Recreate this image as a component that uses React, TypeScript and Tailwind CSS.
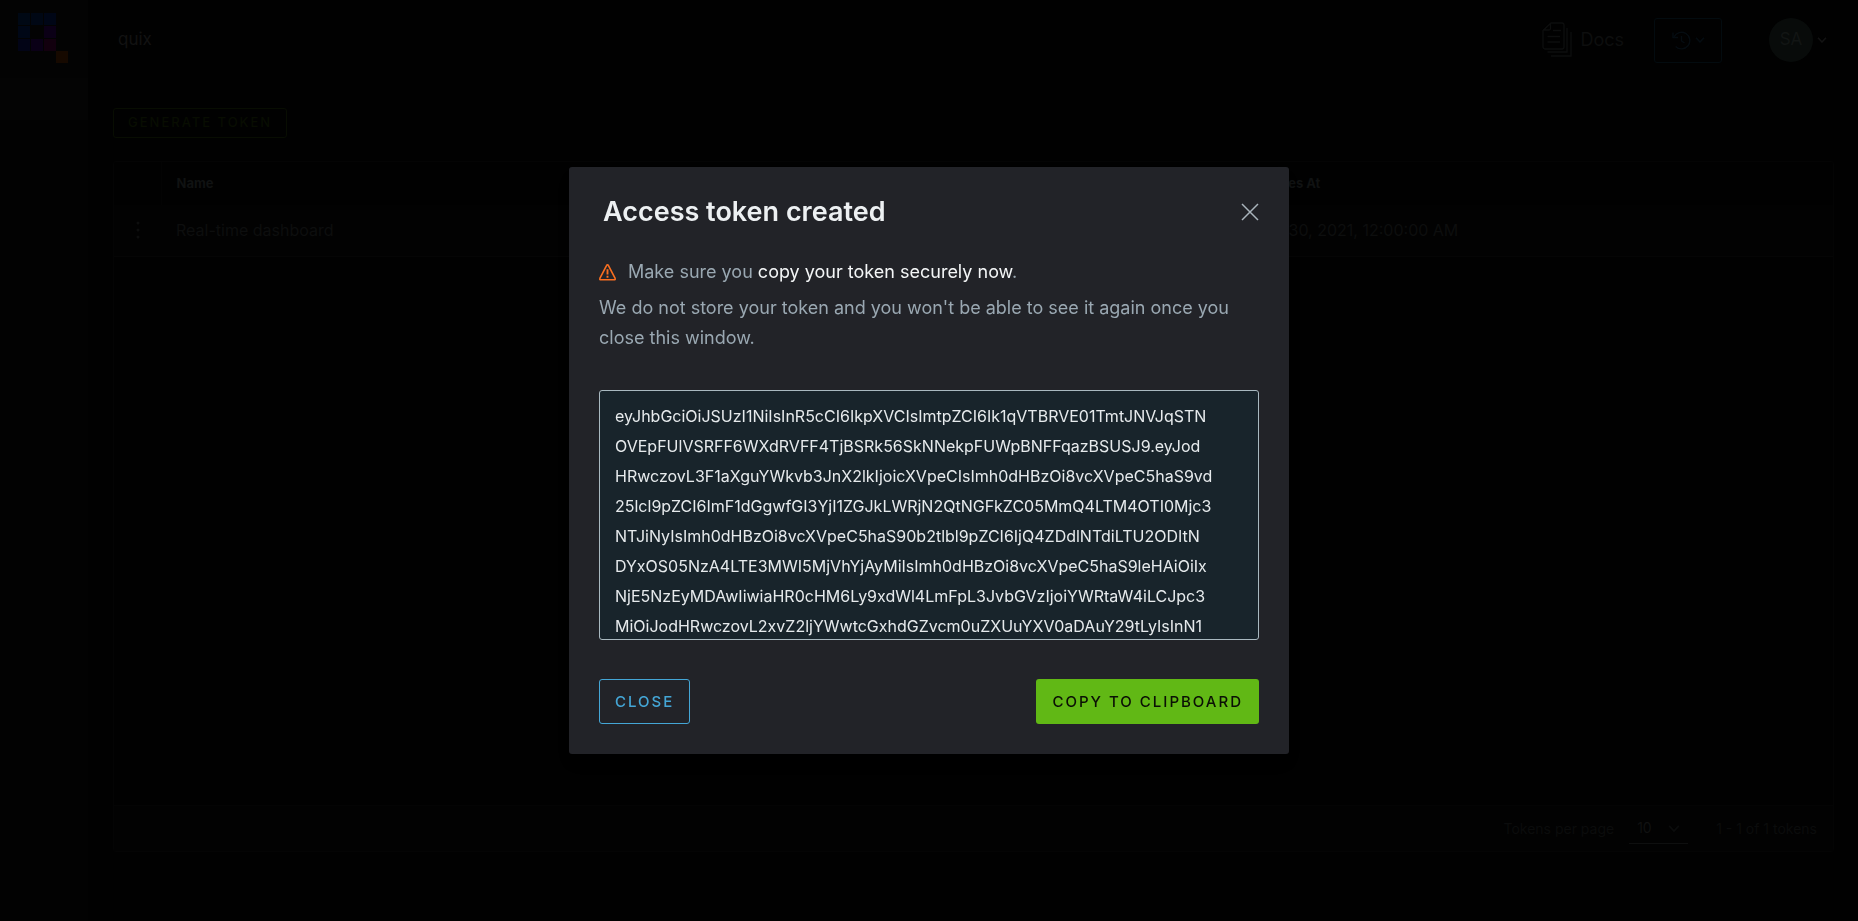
import { useState } from "react";
import type { ReactNode } from "react";

const TOKEN = [
  "eyJhbGciOiJSUzI1NiIsInR5cCI6IkpXVCIsImtpZCI6Ik1qVTBRVE01TmtJNVJqSTN",
  "OVEpFUlVSRFF6WXdRVFF4TjBSRk56SkNNekpFUWpBNFFqazBSUSJ9.eyJod",
  "HRwczovL3F1aXguYWkvb3JnX2lkIjoicXVpeCIsImh0dHBzOi8vcXVpeC5haS9vd",
  "25lcl9pZCI6ImF1dGgwfGI3YjI1ZGJkLWRjN2QtNGFkZC05MmQ4LTM4OTI0Mjc3",
  "NTJiNyIsImh0dHBzOi8vcXVpeC5haS90b2tlbl9pZCI6IjQ4ZDdlNTdiLTU2ODItN",
  "DYxOS05NzA4LTE3MWI5MjVhYjAyMiIsImh0dHBzOi8vcXVpeC5haS9leHAiOiIx",
  "NjE5NzEyMDAwIiwiaHR0cHM6Ly9xdWl4LmFpL3JvbGVzIjoiYWRtaW4iLCJpc3",
  "MiOiJodHRwczovL2xvZ2ljYWwtcGxhdGZvcm0uZXUuYXV0aDAuY29tLyIsInN1",
].join("\n");

const LOGO_TILES = [
  { x: 0, y: 0, fill: "#000814" },
  { x: 13, y: 0, fill: "#000714" },
  { x: 26, y: 0, fill: "#000616" },
  { x: 0, y: 13, fill: "#000716" },
  { x: 26, y: 13, fill: "#0b0016" },
  { x: 0, y: 26, fill: "#020416" },
  { x: 13, y: 26, fill: "#0a0016" },
  { x: 26, y: 26, fill: "#12000e" },
  { x: 38, y: 38, fill: "#160900" },
];

function Logo() {
  return (
    <svg width="50" height="50" viewBox="0 0 50 50" aria-hidden="true">
      {LOGO_TILES.map((t) => (
        <rect key={`${t.x}-${t.y}`} x={t.x} y={t.y} width="12" height="12" fill={t.fill} />
      ))}
    </svg>
  );
}

function Chevron({ className }: { className: string }) {
  return (
    <svg className={className} viewBox="0 0 10 6" fill="none" stroke="currentColor" strokeWidth="1.5" aria-hidden="true">
      <path d="M1 .7 5 5 9 .7" />
    </svg>
  );
}

function DocsIcon() {
  return (
    <svg width="30" height="36" viewBox="0 0 30 36" fill="none" stroke="currentColor" strokeWidth="1.3" aria-hidden="true">
      <path d="M9 1h11a2 2 0 0 1 2 2v22a2 2 0 0 1-2 2H3a2 2 0 0 1-2-2V8.5zM8.5 1v5.5A1.5 1.5 0 0 1 7 8H1" />
      <path d="M11 8.5h8M5.5 14.5H18M5.5 20H18M25 6v24H5.5M29 10v24H9" />
    </svg>
  );
}

function HistoryIcon() {
  return (
    <svg width="19" height="19" viewBox="0 0 19 19" fill="none" stroke="currentColor" strokeWidth="1.4" aria-hidden="true">
      <path d="M1 1.5v5h5" />
      <path d="M2 6a8.3 8.3 0 1 1 1.6 9.4" />
      <path d="M9.5 5v5l3 2" />
    </svg>
  );
}

function Header() {
  return (
    <header className="flex h-20 items-center pr-[31px] pl-[30px] text-[17px]">
      <span className="text-[#121212]">quix</span>
      <a href="#docs" className="ml-auto flex items-center gap-2 text-lg text-[#0d0e0e]">
        <DocsIcon />
        Docs
      </a>
      <button
        type="button"
        aria-label="History"
        className="ml-[30px] flex h-[45px] w-[68px] items-center justify-center gap-1 rounded-[3px] border border-[#030b0f] text-[#050c11]"
      >
        <HistoryIcon />
        <Chevron className="w-[10px]" />
      </button>
      <button type="button" aria-label="Account" className="ml-[47px] flex items-center gap-1 text-[#131313]">
        <span className="flex size-11 items-center justify-center rounded-full bg-[#080b0a] text-[17px] text-[#121514]">SA</span>
        <Chevron className="w-[10px]" />
      </button>
    </header>
  );
}

function TokensPage() {
  return (
    <div className="flex min-h-screen bg-[#010101]">
      <aside className="w-[88px] shrink-0 bg-[#020202]">
        <div className="flex h-[78px] bg-[#030303] pt-[13px] pl-[18px]">
          <Logo />
        </div>
        <div className="h-[42px] bg-[#040404]" />
      </aside>
      <div className="flex min-w-0 flex-1 flex-col">
        <Header />
        <main className="flex flex-1 flex-col items-start pt-7 pr-6 pb-[69px] pl-[25px]">
          <button
            type="button"
            className="h-[30px] rounded-[3px] border border-[#080d02] px-[14px] text-[13px] font-medium tracking-[2px] text-[#080d01]"
          >
            GENERATE TOKEN
          </button>
          <section className="mt-[23px] flex w-full flex-1 flex-col rounded-[3px] border border-[#040404]">
            <table className="w-full table-fixed text-left">
              <thead>
                <tr className="h-[43px] text-[13px] text-[#101212]">
                  <th className="w-[47px] border-r border-[#030303]" aria-label="Actions" />
                  <th className="pl-[15px] font-bold">Name</th>
                  <th className="w-[592px] pl-[15px] font-bold">Expires At</th>
                </tr>
              </thead>
              <tbody>
                <tr className="h-[51px] border-b border-[#050505] bg-[#020202] text-base text-[#0d0e0e]">
                  <td>
                    <button type="button" aria-label="Token actions" className="flex w-full justify-center">
                      <svg width="4" height="18" viewBox="0 0 4 18" fill="currentColor" aria-hidden="true">
                        <circle cx="2" cy="2" r="1.5" />
                        <circle cx="2" cy="9" r="1.5" />
                        <circle cx="2" cy="16" r="1.5" />
                      </svg>
                    </button>
                  </td>
                  <td className="pl-[15px]">Real-time dashboard</td>
                  <td className="pl-[15px]">Jun 30, 2021, 12:00:00 AM</td>
                </tr>
              </tbody>
            </table>
            <footer className="mt-auto flex h-[46px] items-center justify-end border-t border-[#040404] bg-[#020202] pr-4 text-sm text-[#0b0c0c]">
              <label htmlFor="page-size">Tokens per page</label>
              <span className="relative ml-[15px] flex items-center">
                <select
                  id="page-size"
                  defaultValue="10"
                  className="h-[30px] w-[59px] appearance-none border-b border-[#0e0f0f] bg-transparent pl-2 text-[#101111]"
                >
                  <option>10</option>
                </select>
                <Chevron className="pointer-events-none absolute right-2 w-3" />
              </span>
              <span className="ml-7">1 - 1 of 1 tokens</span>
            </footer>
          </section>
        </main>
      </div>
    </div>
  );
}

function WarningIcon() {
  return (
    <svg width="17" height="17" viewBox="0 0 18 18" fill="none" stroke="#f96f20" strokeWidth="1.7" strokeLinejoin="round" aria-hidden="true">
      <path d="M8.1 1.5a1 1 0 0 1 1.8 0l7.2 13.7a1 1 0 0 1-.9 1.5H1.8a1 1 0 0 1-.9-1.5z" />
      <path d="M9 5.5V11M9 12.5v2" strokeWidth="2" />
    </svg>
  );
}

function Modal({ onClose, children }: { onClose: () => void; children: ReactNode }) {
  return (
    <div className="fixed inset-0 flex items-center justify-center">
      <div
        role="dialog"
        aria-modal="true"
        aria-labelledby="dialog-title"
        className="w-[720px] max-w-full rounded-[3px] bg-[#222328] px-[30px] pb-[30px] shadow-lg"
      >
        <div className="flex h-[90px] items-center justify-between pl-1">
          <h1 id="dialog-title" className="text-[27px] font-semibold text-[#edf0f2]">
            Access token created
          </h1>
          <button type="button" aria-label="Close dialog" onClick={onClose} className="text-[#a9b4bc]">
            <svg width="18" height="18" viewBox="0 0 18 18" fill="none" stroke="currentColor" strokeWidth="1.5" aria-hidden="true">
              <path d="M1 1l16 16M17 1 1 17" />
            </svg>
          </button>
        </div>
        {children}
      </div>
    </div>
  );
}

export default function App() {
  const [open, setOpen] = useState(true);
  const close = () => setOpen(false);

  return (
    <div className="font-['Inter','Liberation_Sans',sans-serif]">
      <TokensPage />
      {open && (
        <Modal onClose={close}>
          <p className="flex h-[30px] items-center text-lg text-[#9aa8b2]">
            <WarningIcon />
            <span className="ml-3">
              Make sure you <strong className="font-normal text-[#f4f6f7]">copy your token securely now</strong>.
            </span>
          </p>
          <p className="mt-[6px] text-lg leading-[30px] text-[#9aa8b2]">
            We do not store your token and you won't be able to see it again once you close this window.
          </p>
          <textarea
            readOnly
            aria-label="Access token"
            value={TOKEN}
            className="mt-[37px] block h-[250px] w-full resize-none overflow-hidden rounded-[3px] border border-[#a9b9c0] bg-[#18242b] px-[15px] pt-[10px] text-base leading-[30px] whitespace-pre text-[#e6eaec] outline-none"
          />
          <div className="mt-[39px] flex justify-between text-[15px] font-medium tracking-[2px]">
            <button
              type="button"
              onClick={close}
              className="h-[45px] rounded-[3px] border border-[#44a6d6] px-[15px] pt-0.5 text-[#44a6d6]"
            >
              CLOSE
            </button>
            <button
              type="button"
              onClick={() => navigator.clipboard?.writeText(TOKEN.replace(/\n/g, ""))}
              className="h-[45px] rounded-[3px] bg-[#61b815] px-4 pt-0.5 text-[#0b1005]"
            >
              COPY TO CLIPBOARD
            </button>
          </div>
        </Modal>
      )}
    </div>
  );
}
